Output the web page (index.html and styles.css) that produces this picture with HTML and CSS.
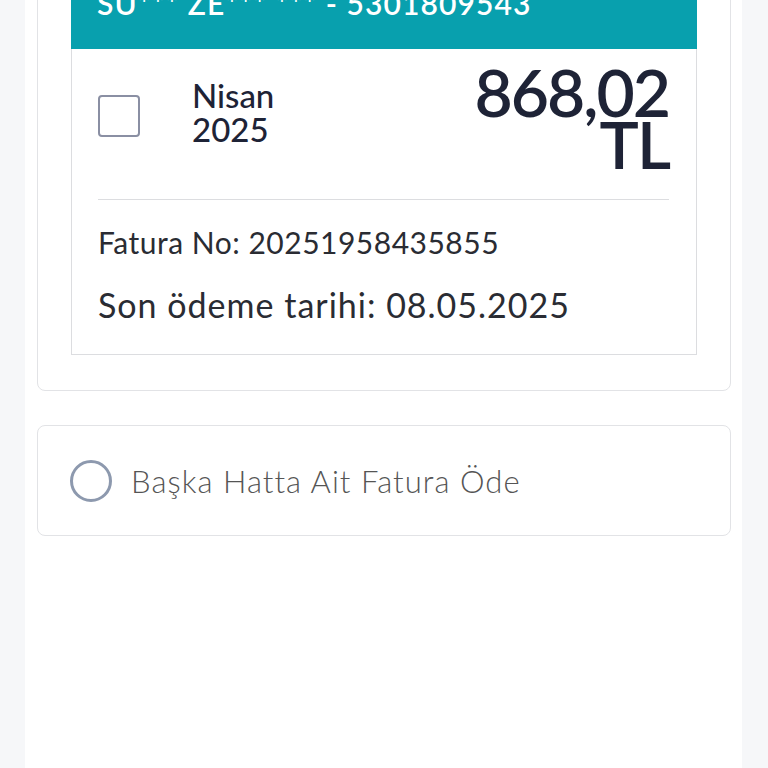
FILE: index.html
```html
<!DOCTYPE html>
<html lang="tr">
<head>
  <meta charset="UTF-8">
  <title>Fatura Öde</title>
  <link rel="stylesheet" href="styles.css">
</head>
<body>
<div class="page">
  <div class="card">
    <div class="bill">
      <div class="bill-head">SU*** ZE*** *** - 5301809543</div>
      <div class="bill-body">
        <div class="bill-row">
          <span class="check"></span>
          <div class="period">Nisan<br>2025</div>
          <div class="amount"><div>868,02</div><div>TL</div></div>
        </div>
        <div class="bill-info">
          <div class="bill-no">Fatura No: 20251958435855</div>
          <div class="bill-due">Son ödeme tarihi: 08.05.2025</div>
        </div>
      </div>
    </div>
  </div>

  <div class="card other">
    <span class="radio"></span>
    <span class="other-label">Başka Hatta Ait Fatura Öde</span>
  </div>
</div>
</body>
</html>
```

FILE: styles.css
```css
body {
  margin: 0;
  background: #f6f7f9;
  font-family: Lato, "Noto Sans", sans-serif;
  color: #1e2336;
}

.page {
  width: 717px;
  margin: -80px 0 0 25px;
  min-height: 900px;
  background: #fff;
  padding-top: 1px;
}

.card {
  margin: 0 11px 34px 12px;
  border: 1px solid #e2e3e6;
  border-radius: 8px;
  padding: 33px 33px 35px;
  background: #fff;
}

.bill {
  border: 1px solid #dcdde0;
  border-top: 0;
}

.bill-head {
  background: #08a0ae;
  color: #fff;
  font-size: 30px;
  font-weight: 600;
  letter-spacing: 1.1px;
  line-height: 40px;
  height: 94px;
  box-sizing: border-box;
  padding: 28px 26px 0;
  margin: 0 -1px;
}

.bill-body {
  padding: 0 27px 0 26px;
}

.bill-row {
  display: flex;
  align-items: flex-start;
  height: 150px;
  border-bottom: 1px solid #dcdde0;
}

.check {
  width: 38px;
  height: 38px;
  border: 2px solid #8a8fa3;
  border-radius: 4px;
  margin: 46px 52px 0 0;
}

.period {
  font-size: 33px;
  line-height: 34px;
  font-weight: 500;
  margin-top: 29px;
  flex: 1;
}

.amount {
  font-size: 66px;
  line-height: 52px;
  font-weight: 600;
  text-align: right;
  letter-spacing: -2px;
  margin-top: 17px;
}

.bill-info {
  padding: 18px 0 19px;
}

.bill-no {
  font-size: 30px;
  line-height: 48px;
  color: #2a2c33;
  letter-spacing: 0.5px;
}

.bill-due {
  font-size: 34px;
  line-height: 60px;
  color: #2a2c33;
  letter-spacing: 1px;
  margin-top: 9px;
}

.other {
  display: flex;
  align-items: center;
  height: 111px;
  padding: 0 0 0 32px;
  box-sizing: border-box;
}

.radio {
  width: 36px;
  height: 36px;
  border: 3px solid #8d99ae;
  border-radius: 50%;
  margin-right: 19px;
}

.other-label {
  font-size: 31px;
  font-weight: 300;
  color: #555;
  letter-spacing: 1.05px;
}
```
